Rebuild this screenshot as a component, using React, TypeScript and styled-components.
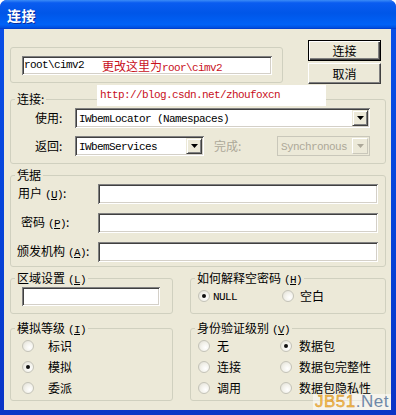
import React from "react";
import styled, { createGlobalStyle } from "styled-components";

const CJK = `"Noto Sans CJK SC", "Noto Sans", sans-serif`;
const MONO = `"Liberation Mono", "DejaVu Sans Mono", monospace`;

const Global = createGlobalStyle`
  html, body { margin: 0; padding: 0; background: #fff; }
  body { width: 396px; height: 415px; overflow: hidden; }
`;

const Window = styled.div`
  position: relative;
  width: 396px;
  height: 415px;
  display: flex;
  flex-direction: column;
  background: #0831d9;
  border-radius: 7px 7px 0 0;
  overflow: hidden;
  font-family: ${CJK};
  font-size: 12px;
  color: #000;
`;

const TitleBar = styled.div`
  flex: none;
  height: 29px;
  display: flex;
  align-items: center;
  padding-left: 7px;
  background: linear-gradient(
    180deg,
    #3b8cf7 0%,
    #0a5cf0 10%,
    #0056e8 45%,
    #0062f7 85%,
    #0050e0 95%,
    #0038c8 100%
  );
  color: #fff;
  font-weight: 700;
  font-size: 14px;
  letter-spacing: 0.5px;
  text-shadow: 1px 1px 0 #0b2a9c;
`;

const Frame = styled.div`
  flex: 1;
  display: flex;
  padding: 0 5px 5px 4px;
  background: linear-gradient(180deg, #0a4ee6 0%, #0641d6 60%, #0a34c6 100%);
`;

const Client = styled.div`
  flex: 1;
  display: flex;
  flex-direction: column;
  background: #ece9d8;
  padding: 11px 5px 0 6px;
`;

const TopRow = styled.div`
  display: flex;
  align-items: flex-start;
  height: 44px;
  flex: none;
`;

const PlainGroup = styled.div`
  margin-top: 7px;
  width: 273px;
  height: 36px;
  box-sizing: border-box;
  border: 1px solid #d0d0bf;
  border-radius: 3px;
  display: flex;
  align-items: center;
  padding-left: 11px;
`;

const ButtonCol = styled.div`
  margin-left: 25px;
  display: flex;
  flex-direction: column;
  gap: 2px;
  width: 73px;
`;

const Button = styled.div<{ $default?: boolean }>`
  height: 21px;
  box-sizing: border-box;
  display: flex;
  align-items: center;
  justify-content: center;
  background: #ece9d8;
  font-size: 12px;
  border: 1px solid;
  border-color: ${(p) => (p.$default ? "#000" : "#fff #404040 #404040 #fff")};
  box-shadow: ${(p) =>
    p.$default
      ? "inset 1px 1px 0 #fff, inset -1px -1px 0 #404040, inset -2px -2px 0 #808080"
      : "inset -1px -1px 0 #808080"};
`;

const sunken = `
  background: #fff;
  box-sizing: border-box;
  box-shadow: inset 1px 1px 0 #808080, inset -1px -1px 0 #fff, inset 2px 2px 0 #404040, inset -2px -2px 0 #d4d0c8;
`;

const TextBox = styled.div<{ $w?: number; $h?: number }>`
  ${sunken}
  width: ${(p) => (p.$w ? `${p.$w}px` : "auto")};
  flex: ${(p) => (p.$w ? "none" : "1")};
  height: ${(p) => p.$h ?? 20}px;
  display: flex;
  align-items: center;
  padding-left: 2px;
  white-space: pre;
`;

const Mono = styled.span<{ $color?: string }>`
  font-family: ${MONO};
  font-size: 11px;
  letter-spacing: -0.6px;
  color: ${(p) => p.$color ?? "#000"};
`;

const RedNote = styled.span`
  margin-left: 18px;
  color: #c8101c;
  font-size: 12px;
`;

const Group = styled.fieldset<{ $mt?: number; $h: number; $w?: number }>`
  margin: ${(p) => p.$mt ?? 0}px 0 0 0;
  padding: 0;
  border: 1px solid #d0d0bf;
  border-radius: 3px;
  min-inline-size: 0;
  box-sizing: border-box;
  height: ${(p) => p.$h}px;
  flex: none;
  width: ${(p) => (p.$w ? `${p.$w}px` : "auto")};
`;

const Legend = styled.legend`
  margin-left: 4px;
  padding: 0 2px;
  height: 14px;
  line-height: 14px;
  font-size: 12px;
  white-space: nowrap;
`;

const Key = styled.span`
  font-family: ${MONO};
  font-size: 11px;
  letter-spacing: -0.6px;
  margin-left: 3px;
  & u {
    text-underline-offset: 1px;
  }
`;

const Rows = styled.div<{ $gap: number; $pt: number; $pl: number }>`
  display: flex;
  flex-direction: column;
  gap: ${(p) => p.$gap}px;
  padding: ${(p) => p.$pt}px 7px 0 ${(p) => p.$pl}px;
`;

const Row = styled.div`
  display: flex;
  align-items: center;
  height: 20px;
`;

const Label = styled.div<{ $w: number; $pl?: number; $disabled?: boolean }>`
  width: ${(p) => p.$w}px;
  flex: none;
  box-sizing: border-box;
  padding-left: ${(p) => p.$pl ?? 0}px;
  color: ${(p) => (p.$disabled ? "#aca899" : "#000")};
  white-space: nowrap;
  line-height: 16px;
`;

const Combo = styled.div<{ $w: number; $disabled?: boolean }>`
  width: ${(p) => p.$w}px;
  height: 20px;
  flex: none;
  box-sizing: border-box;
  display: flex;
  align-items: center;
  padding: 2px 2px 2px 4px;
  ${(p) =>
    p.$disabled
      ? "background: #ece9d8; border: 1px solid #c9c7ba; padding: 1px 1px 1px 3px;"
      : sunken}
`;

const ComboText = styled.div`
  flex: 1;
  white-space: pre;
  overflow: hidden;
  line-height: 16px;
`;

const DropBtn = styled.div<{ $disabled?: boolean }>`
  width: 16px;
  height: 16px;
  flex: none;
  box-sizing: border-box;
  display: flex;
  align-items: center;
  justify-content: center;
  background: #ece9d8;
  border: 1px solid;
  border-color: ${(p) => (p.$disabled ? "#fff #c9c7ba #c9c7ba #fff" : "#ece9d8 #404040 #404040 #ece9d8")};
  box-shadow: ${(p) => (p.$disabled ? "none" : "inset 1px 1px 0 #fff, inset -1px -1px 0 #808080")};
`;

const Arrow = ({ color }: { color: string }) => (
  <svg width="7" height="4" viewBox="0 0 7 4">
    <path d="M0 0H7L3.5 4Z" fill={color} />
  </svg>
);

const BottomRow = styled.div<{ $mt: number }>`
  display: grid;
  grid-template-columns: 163px 1fr;
  column-gap: 17px;
  flex: none;
  margin-top: ${(p) => p.$mt}px;
`;

const RadioGrid = styled.div<{ $cols: string; $pl: number; $pt: number; $rowH: number }>`
  display: grid;
  grid-template-columns: ${(p) => p.$cols};
  grid-auto-rows: ${(p) => p.$rowH}px;
  padding: ${(p) => p.$pt}px 0 0 ${(p) => p.$pl}px;
`;

const RadioItem = styled.div<{ $gap: number }>`
  display: flex;
  align-items: center;
  gap: ${(p) => p.$gap}px;
  white-space: nowrap;
  line-height: 16px;
`;

const RadioCircle = styled.span<{ $on?: boolean }>`
  width: 12px;
  height: 12px;
  flex: none;
  box-sizing: border-box;
  border-radius: 50%;
  border: 1px solid #c4c3b8;
  background: radial-gradient(circle at 65% 65%, #ffffff 0%, #f2f1ea 50%, #dcdad0 100%);
  display: flex;
  align-items: center;
  justify-content: center;
  &::after {
    content: "";
    width: 4px;
    height: 4px;
    border-radius: 50%;
    background: ${(p) => (p.$on ? "#101010" : "transparent")};
  }
`;

const BlogNote = styled.div`
  position: absolute;
  left: 97px;
  top: 85px;
  width: 229px;
  height: 21px;
  background: #fff;
  box-sizing: border-box;
  padding: 1px 0 0 3px;
  line-height: 14px;
`;

const Watermark = styled.div`
  position: absolute;
  left: 313px;
  top: 394px;
  padding: 0 2px;
  background: rgba(255, 255, 255, 0.5);
  font-family: "Liberation Sans", Arial, sans-serif;
  font-size: 17px;
  line-height: 16px;
  letter-spacing: 0.5px;
`;

const WmA = styled.span`
  color: #f5c050;
  -webkit-text-stroke: 0.4px #d08a20;
`;

const WmB = styled.span`
  color: #6f88a8;
`;

function Radio({ on, gap, children }: { on?: boolean; gap: number; children: React.ReactNode }) {
  return (
    <RadioItem $gap={gap}>
      <RadioCircle $on={on} />
      <span>{children}</span>
    </RadioItem>
  );
}

function K({ k }: { k: string }) {
  return (
    <Key>
      (<u>{k}</u>)
    </Key>
  );
}

export default function App() {
  return (
    <>
      <Global />
      <Window>
        <TitleBar>连接</TitleBar>
        <Frame>
          <Client>
            <TopRow>
              <PlainGroup>
                <TextBox $w={250} $h={19}>
                  <Mono>root\cimv2</Mono>
                  <RedNote>
                    更改这里为<Mono $color="#c8101c">roor\cimv2</Mono>
                  </RedNote>
                </TextBox>
              </PlainGroup>
              <ButtonCol>
                <Button $default>连接</Button>
                <Button>取消</Button>
              </ButtonCol>
            </TopRow>

            <Group $mt={8} $h={72}>
              <Legend>连接:</Legend>
              <Rows $gap={8} $pt={2} $pl={24}>
                <Row>
                  <Label $w={40}>使用:</Label>
                  <Combo $w={295}>
                    <ComboText>
                      <Mono>IWbemLocator (Namespaces)</Mono>
                    </ComboText>
                    <DropBtn>
                      <Arrow color="#000" />
                    </DropBtn>
                  </Combo>
                </Row>
                <Row>
                  <Label $w={40}>返回:</Label>
                  <Combo $w={129}>
                    <ComboText>
                      <Mono>IWbemServices</Mono>
                    </ComboText>
                    <DropBtn>
                      <Arrow color="#000" />
                    </DropBtn>
                  </Combo>
                  <Label $w={73} $pl={10} $disabled>
                    完成:
                  </Label>
                  <Combo $w={93} $disabled>
                    <ComboText>
                      <Mono $color="#aca899">Synchronous</Mono>
                    </ComboText>
                    <DropBtn $disabled>
                      <Arrow color="#aca899" />
                    </DropBtn>
                  </Combo>
                </Row>
              </Rows>
            </Group>

            <Group $mt={4} $h={99}>
              <Legend>凭据</Legend>
              <Rows $gap={9} $pt={2} $pl={0}>
                <Row>
                  <Label $w={87} $pl={7}>
                    用户<K k="U" />:
                  </Label>
                  <TextBox />
                </Row>
                <Row>
                  <Label $w={87} $pl={10}>
                    密码<K k="P" />:
                  </Label>
                  <TextBox />
                </Row>
                <Row>
                  <Label $w={87} $pl={6}>
                    颁发机构<K k="A" />:
                  </Label>
                  <TextBox />
                </Row>
              </Rows>
            </Group>

            <BottomRow $mt={4}>
              <Group $h={43}>
                <Legend>
                  区域设置<K k="L" />
                </Legend>
                <Rows $gap={0} $pt={2} $pl={11}>
                  <TextBox $w={138} $h={19} />
                </Rows>
              </Group>
              <Group $h={43}>
                <Legend>
                  如何解释空密码<K k="H" />
                </Legend>
                <RadioGrid $cols="84px 1fr" $pl={7} $pt={1} $rowH={20}>
                  <Radio on gap={3}>
                    <Mono>NULL</Mono>
                  </Radio>
                  <Radio gap={6}>空白</Radio>
                </RadioGrid>
              </Group>
            </BottomRow>

            <BottomRow $mt={7}>
              <Group $h={80}>
                <Legend>
                  模拟等级<K k="I" />
                </Legend>
                <RadioGrid $cols="1fr" $pl={11} $pt={0} $rowH={21}>
                  <Radio gap={14}>标识</Radio>
                  <Radio on gap={14}>
                    模拟
                  </Radio>
                  <Radio gap={14}>委派</Radio>
                </RadioGrid>
              </Group>
              <Group $h={80}>
                <Legend>
                  身份验证级别<K k="V" />
                </Legend>
                <RadioGrid $cols="82px 1fr" $pl={7} $pt={0} $rowH={21}>
                  <Radio gap={7}>无</Radio>
                  <Radio on gap={7}>
                    数据包
                  </Radio>
                  <Radio gap={7}>连接</Radio>
                  <Radio gap={7}>数据包完整性</Radio>
                  <Radio gap={7}>调用</Radio>
                  <Radio gap={7}>数据包隐私性</Radio>
                </RadioGrid>
              </Group>
            </BottomRow>
          </Client>
        </Frame>

        <BlogNote>
          <Mono $color="#c8101c">http://blog.csdn.net/zhoufoxcn</Mono>
        </BlogNote>
        <Watermark>
          <WmA>JB51</WmA>
          <WmB>.Net</WmB>
        </Watermark>
      </Window>
    </>
  );
}
